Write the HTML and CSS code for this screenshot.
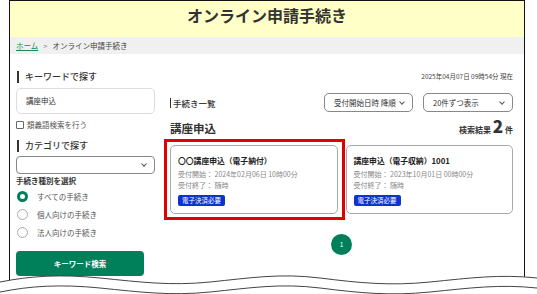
FILE: index.html
```html
<!DOCTYPE html>
<html lang="ja">
<head>
    <meta charset="UTF-8">
    <title>オンライン申請手続き</title>
    <link rel="stylesheet" href="styles.css">
</head>
<body>
    <div class="frame">
        <header class="site-header">
            <h1>オンライン申請手続き</h1>
        </header>
        <nav class="breadcrumb">
            <a href="#">ホーム</a><span class="sep">&gt;</span><span>オンライン申請手続き</span>
        </nav>

        <div class="main">
            <aside class="sidebar">
                <h2 class="bar-title">キーワードで探す</h2>
                <div class="text-input">講座申込</div>
                <label class="check-row"><span class="checkbox"></span>類義語検索を行う</label>

                <h2 class="bar-title cat">カテゴリで探す</h2>
                <div class="select wide"><span></span><span class="chev"></span></div>

                <h3 class="sub-title">手続き種別を選択</h3>
                <div class="radio-row"><span class="radio on"></span>すべての手続き</div>
                <div class="radio-row"><span class="radio"></span>個人向けの手続き</div>
                <div class="radio-row"><span class="radio"></span>法人向けの手続き</div>

                <button class="search-button">キーワード検索</button>
            </aside>

            <section class="content">
                <p class="timestamp">2025年04月07日 09時54分 現在</p>
                <div class="list-bar">
                    <h2 class="list-title">手続き一覧</h2>
                    <div class="select sort"><span>受付開始日時 降順</span><span class="chev"></span></div>
                    <div class="select per"><span>20件ずつ表示</span><span class="chev"></span></div>
                </div>
                <div class="result-head">
                    <h2>講座申込</h2>
                    <p class="count">検索結果 <strong>2</strong> 件</p>
                </div>
                <div class="cards">
                    <div class="card highlight">
                        <h4>〇〇講座申込（電子納付）</h4>
                        <p>受付開始： 2024年02月06日 10時00分</p>
                        <p>受付終了： 随時</p>
                        <span class="badge">電子決済必要</span>
                    </div>
                    <div class="card">
                        <h4>講座申込（電子収納）1001</h4>
                        <p>受付開始： 2023年10月01日 00時00分</p>
                        <p>受付終了： 随時</p>
                        <span class="badge">電子決済必要</span>
                    </div>
                </div>
                <div class="pager"><span class="page">1</span></div>
            </section>
        </div>
    </div>

    <!-- torn edge -->
    <svg class="torn" width="537" height="30" viewBox="0 0 537 30">
        <path d="M0 12 C 30 6, 60 4, 100 8 S 170 16, 210 12 S 280 3, 320 8 S 390 16, 430 12 S 500 4, 537 8 L 537 30 L 0 30 Z" fill="#fff"/>
        <path d="M0 12 C 30 6, 60 4, 100 8 S 170 16, 210 12 S 280 3, 320 8 S 390 16, 430 12 S 500 4, 537 8" fill="none" stroke="#444" stroke-width="1"/>
        <path d="M0 22 C 30 16, 60 14, 100 18 S 170 26, 210 22 S 280 13, 320 18 S 390 26, 430 22 S 500 14, 537 18" fill="none" stroke="#444" stroke-width="1"/>
    </svg>
</body>
</html>
```

FILE: styles.css
```css
* {
    box-sizing: border-box;
}

:root {
    --green: #00805a;
    --text: #333;
    --muted: #777;
    --line: #d6d6d6;
}

body {
    margin: 0;
    background: #fff;
    font-family: "Noto Sans CJK JP", "Noto Sans", sans-serif;
    color: var(--text);
    position: relative;
    height: 294px;
    overflow: hidden;
}

h1, h2, h3, h4, p {
    margin: 0;
}

.frame {
    margin-left: 9px;
    width: 516px;
    height: 294px;
    border: 1px solid #111;
    border-bottom: none;
}

/* Header */
.site-header {
    background: #ffffc8;
    height: 36px;
    padding-top: 3px;
    text-align: center;
}

.site-header h1 {
    font-size: 16px;
    line-height: 22px;
    font-weight: 700;
    color: #333;
}

.breadcrumb {
    background: #f0f0f0;
    height: 17px;
    padding-left: 6px;
    font-size: 7.5px;
    line-height: 17px;
    color: #444;
}

.breadcrumb a {
    color: #1a8a5f;
}

.breadcrumb .sep {
    margin: 0 5px;
    color: #888;
}

/* Main */
.main {
    display: flex;
    gap: 15px;
    padding: 17px 11px 0 6px;
}

.sidebar {
    width: 139px;
    flex-shrink: 0;
}

.bar-title {
    font-size: 9px;
    font-weight: 500;
    line-height: 12px;
    border-left: 2px solid #333;
    padding-left: 6px;
    margin-left: 1px;
}

.bar-title.cat {
    margin-top: 9px;
}

.text-input {
    margin-top: 5px;
    height: 26px;
    border: 1px solid #ddd;
    border-radius: 5px;
    padding-left: 9px;
    font-size: 7.5px;
    line-height: 24px;
}

.check-row {
    display: flex;
    align-items: center;
    gap: 3px;
    margin-top: 5px;
    font-size: 7.5px;
    line-height: 12px;
    color: #555;
}

.checkbox {
    width: 8px;
    height: 8px;
    border: 1px solid #666;
    border-radius: 1px;
}

.select {
    display: flex;
    align-items: center;
    justify-content: space-between;
    border: 1px solid #888;
    border-radius: 4px;
    padding: 0 8px 0 9px;
    font-size: 7.5px;
    color: #333;
}

.select.wide {
    margin-top: 4px;
    height: 18px;
}

.chev {
    width: 4px;
    height: 4px;
    border-right: 1px solid #555;
    border-bottom: 1px solid #555;
    transform: rotate(45deg);
    margin-top: -2px;
}

.sub-title {
    margin-top: 1px;
    font-size: 7.5px;
    font-weight: 700;
    line-height: 12px;
}

.radio-row {
    display: flex;
    align-items: center;
    gap: 9px;
    height: 18px;
    padding-left: 1px;
    font-size: 7.5px;
    color: #555;
}

.radio {
    width: 11px;
    height: 11px;
    border: 1px solid #aaa;
    border-radius: 50%;
}

.radio.on {
    border: 3px solid var(--green);
    background: #fff;
}

.search-button {
    display: block;
    margin-top: 10px;
    width: 128px;
    height: 25px;
    border: none;
    border-radius: 4px;
    background: var(--green);
    color: #fff;
    font-family: inherit;
    font-size: 7.5px;
    font-weight: 700;
}

/* Content */
.content {
    flex: 1;
}

.timestamp {
    text-align: right;
    font-size: 6.5px;
    line-height: 10px;
    color: #444;
    margin-top: 0;
}

.list-bar {
    display: flex;
    align-items: center;
    gap: 10px;
    margin-top: 12px;
}

.list-title {
    flex: 1;
    font-size: 8.5px;
    font-weight: 500;
    line-height: 10px;
    border-left: 1px solid #333;
    padding-left: 2px;
}

.select.sort,
.select.per {
    height: 19px;
    border-radius: 5px;
}

.select.sort {
    width: 89px;
}

.select.per {
    width: 90px;
}

.result-head {
    display: flex;
    align-items: baseline;
    justify-content: space-between;
    margin-top: 6px;
}

.result-head h2 {
    font-size: 11.5px;
    font-weight: 700;
    line-height: 16px;
}

.count {
    font-size: 8px;
    font-weight: 700;
}

.count strong {
    font-size: 17px;
    line-height: 16px;
}

.cards {
    display: flex;
    gap: 8px;
    margin-top: 9px;
}

.card {
    flex: 1;
    position: relative;
    height: 69px;
    border: 1px solid #aaa;
    border-radius: 5px;
    padding: 9px 7px 0;
    font-size: 7px;
    color: #888;
}

/* red marker drawn over the first card */
.card.highlight::after {
    content: "";
    position: absolute;
    top: -7px;
    left: -7px;
    right: -8px;
    bottom: -7px;
    border: 3px solid #e00000;
}

.card h4 {
    font-size: 7.8px;
    font-weight: 700;
    color: #222;
    line-height: 11px;
    margin-bottom: 3px;
}

.card p {
    line-height: 11px;
}

.badge {
    display: inline-block;
    margin-top: 4px;
    background: #0c34cc;
    color: #fff;
    font-size: 6.5px;
    line-height: 11px;
    padding: 0 4px;
    border-radius: 2px;
}

.pager {
    display: flex;
    justify-content: center;
    margin-top: 20px;
}

.page {
    width: 21px;
    height: 21px;
    border-radius: 50%;
    background: var(--green);
    color: #fff;
    font-size: 6.5px;
    line-height: 21px;
    text-align: center;
}

.torn {
    position: absolute;
    left: 0;
    top: 270px;
}
```
